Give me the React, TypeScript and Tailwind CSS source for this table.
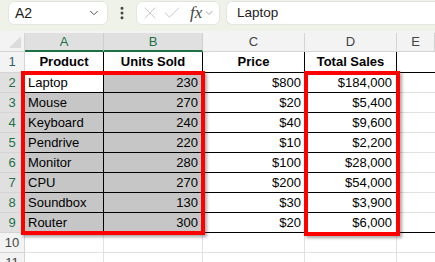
import React from "react";
import { ChevronDown, EllipsisVertical, X, Check } from "lucide-react";

const rows = [
  ["Laptop", "230", "$800", "$184,000"],
  ["Mouse", "270", "$20", "$5,400"],
  ["Keyboard", "240", "$40", "$9,600"],
  ["Pendrive", "220", "$10", "$2,200"],
  ["Monitor", "280", "$100", "$28,000"],
  ["CPU", "270", "$200", "$54,000"],
  ["Soundbox", "130", "$30", "$3,900"],
  ["Router", "300", "$20", "$6,000"],
];

const Toolbar = () => (
  <div className="flex h-[31px] items-start gap-[6px] bg-[#eef2e8] pl-2 pt-[1px]">
    <div className="flex h-6 w-[100px] items-center justify-between rounded-md border border-[#e3e6df] bg-white pl-[6px] pr-[6px]">
      <span className="text-[14px] text-[#222]">A2</span>
      <ChevronDown size={14} strokeWidth={1.5} className="text-[#444]" />
    </div>
    <div className="flex h-6 w-4 items-center justify-center">
      <EllipsisVertical size={16} strokeWidth={2.5} className="text-[#444]" />
    </div>
    <div className="flex h-6 w-[84px] items-center rounded-md border border-[#e3e6df] bg-white pl-[3px]">
      <X size={20} strokeWidth={1} className="text-[#bdbdbd]" />
      <Check size={20} strokeWidth={1} className="ml-[2px] text-[#bdbdbd]" />
      <span className="ml-[8px] font-['Liberation_Serif',serif] text-[17px] italic text-[#444]">fx</span>
      <ChevronDown size={12} strokeWidth={1.5} className="ml-[1px] text-[#888]" />
    </div>
    <div className="flex h-6 flex-1 items-center rounded-l-md border border-r-0 border-[#e3e6df] bg-white pl-[10px]">
      <span className="text-[13.5px] text-[#222]">Laptop</span>
    </div>
  </div>
);

const colHeads = ["A", "B", "C", "D", "E"];

export default function App() {
  return (
    <div className="relative h-[262px] w-[435px] overflow-hidden bg-white font-['Liberation_Sans',Arial,sans-serif] text-[13px] text-black">
      <Toolbar />
      <div className="h-[2px] bg-[#f3f3f3]" />
      <div className="grid grid-cols-[25px_79px_99px_102px_92px_1fr]">
        {/* column headers */}
        <div className="relative h-[19px] border-r border-b border-[#d4d4d4] bg-[#f3f3f3]">
          <div className="absolute right-[3px] bottom-[3px] h-0 w-0 border-l-[12px] border-t-[12px] border-l-transparent border-t-transparent border-b-0 border-r-[12px] border-r-[#dcdcdc]" />
        </div>
        {colHeads.map((c, i) => {
          const sel = i < 2;
          return (
            <div
              key={c}
              className={
                sel
                  ? "flex h-[19px] items-center justify-center border-r border-b-2 border-r-[#cfcfcf] border-b-[#1e7145] bg-[#e0e0e0] text-[13px] text-[#1e7145]"
                  : "flex h-[19px] items-center justify-center border-r border-b border-[#d4d4d4] bg-[#f3f3f3] text-[13px] text-[#444]"
              }
            >
              {c}
            </div>
          );
        })}

        {/* row 1 */}
        <div className="flex h-[21px] items-center justify-center border-r border-b border-[#d4d4d4] bg-[#f3f3f3] text-[13px] text-[#2b5f6e]">
          1
        </div>
        {["Product", "Units Sold", "Price", "Total Sales"].map((h) => (
          <div key={h} className="flex h-[21px] items-center justify-center border-r border-b border-black font-bold">
            {h}
          </div>
        ))}
        <div className="h-[21px] border-b border-black" />

        {/* data rows */}
        {rows.map((r, i) => {
          const n = i + 2;
          return (
            <React.Fragment key={n}>
              <div className="flex h-5 items-center justify-center border-r border-b border-r-[#bdbdbd] border-b-[#d4d4d4] bg-[#e0e0e0] text-[13px] text-[#1e7145]">
                {n}
              </div>
              <div className={`flex h-5 items-center border-r border-b border-black pl-[3px] ${i === 0 ? "bg-white" : "bg-[#c6c6c6]"}`}>
                {r[0]}
              </div>
              <div className="flex h-5 items-center justify-end border-r border-b border-black bg-[#c6c6c6] pr-[4px]">
                {r[1]}
              </div>
              <div className="flex h-5 items-center justify-end border-r border-b border-black pr-[3px]">
                {r[2]}
              </div>
              <div className="flex h-5 items-center justify-end border-r border-b border-black pr-[4px]">
                {r[3]}
              </div>
              <div className={`h-5 border-b ${i === 7 ? "border-black" : "border-[#e1e1e1]"}`} />
            </React.Fragment>
          );
        })}

        {/* empty rows */}
        {[10, 11].map((n) => (
          <React.Fragment key={n}>
            <div className="flex h-5 items-center justify-center border-r border-b border-[#d4d4d4] bg-[#f3f3f3] text-[13px] text-[#444]">
              {n}
            </div>
            <div className="h-5 border-r border-b border-[#e1e1e1]" />
            <div className="h-5 border-r border-b border-[#e1e1e1]" />
            <div className="h-5 border-r border-b border-[#e1e1e1]" />
            <div className="h-5 border-r border-b border-[#e1e1e1]" />
            <div className="h-5 border-b border-[#e1e1e1]" />
          </React.Fragment>
        ))}
      </div>

      {/* red highlight boxes */}
      <div className="absolute left-[21px] top-[71px] h-[164px] w-[184px] border-4 border-[#ff0000] shadow-[2px_2px_3px_rgba(0,0,0,0.35)]" />
      <div className="absolute left-[304px] top-[71px] h-[165px] w-[96px] border-4 border-[#ff0000] shadow-[2px_2px_3px_rgba(0,0,0,0.35)]" />
    </div>
  );
}
